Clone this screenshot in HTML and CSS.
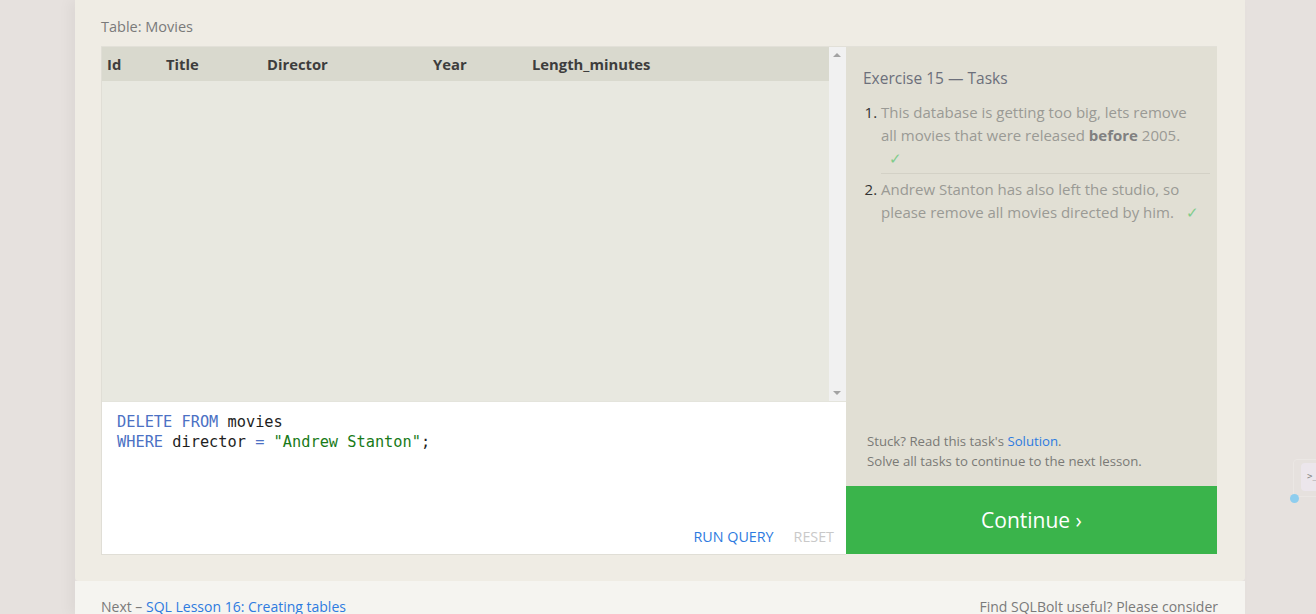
FILE: index.html
```html
<!DOCTYPE html>
<html>
<head>
<meta charset="utf-8">
<link rel="stylesheet" href="styles.css">
</head>
<body>
<div class="page">
  <section class="lesson">
    <div class="table-label">Table: Movies</div>
    <div class="exercise">
      <div class="left">
        <div class="results">
          <div class="results-table">
            <div class="thead">
              <span class="th c-id">Id</span>
              <span class="th c-title">Title</span>
              <span class="th c-director">Director</span>
              <span class="th c-year">Year</span>
              <span class="th c-len">Length_minutes</span>
            </div>
          </div>
          <div class="scrollbar">
            <span class="arrow up"></span>
            <span class="arrow down"></span>
          </div>
        </div>
        <div class="editor">
          <pre class="code"><span class="kw">DELETE FROM</span> movies
<span class="kw">WHERE</span> director <span class="op">=</span> <span class="str">"Andrew Stanton"</span>;</pre>
          <div class="editor-actions">
            <span class="run">RUN QUERY</span>
            <span class="reset">RESET</span>
          </div>
        </div>
      </div>
      <div class="right">
        <div class="tasks">
          <h3 class="tasks-title">Exercise 15 — Tasks</h3>
          <ol class="task-list">
            <li class="task">This database is getting too big, lets remove all movies that were released <b>before</b> 2005. <span class="check">✓</span></li>
            <li class="task">Andrew Stanton has also left the studio, so please remove all movies directed by him. <span class="check">✓</span></li>
          </ol>
          <div class="help">
            <div>Stuck? Read this task's <span class="link">Solution</span>.</div>
            <div>Solve all tasks to continue to the next lesson.</div>
          </div>
        </div>
        <div class="continue">Continue ›</div>
      </div>
    </div>
  </section>
  <footer class="footer">
    <div class="next">Next – <span class="link">SQL Lesson 16: Creating tables</span></div>
    <div class="support">Find SQLBolt useful? Please consider</div>
  </footer>
</div>
<div class="ext">
  <div class="ext-frame"></div>
  <div class="ext-box">&gt;_</div>
  <div class="ext-dot"></div>
</div>
</body>
</html>
```

FILE: styles.css
```css
html, body {
  margin: 0;
  padding: 0;
}
body {
  background: #e6e1de;
  font-family: "Open Sans", "Noto Sans", sans-serif;
  height: 614px;
  overflow: hidden;
}
.page {
  width: 1170px;
  margin-left: 75px;
  box-shadow: -6px 0 12px rgba(0,0,0,0.04);
}
.lesson {
  background: #efece4;
  padding: 16px 26px 26px 26px;
  border-radius: 0 0 4px 4px;
}
.table-label {
  font-size: 14.5px;
  color: #7a7a7a;
  line-height: 22px;
  height: 30px;
}
.exercise {
  display: flex;
  width: 1116px;
  border-top: 1px solid #e2e0d8;
}
.left {
  width: 744px;
  border-left: 1px solid #e0ded6;
  display: flex;
  flex-direction: column;
}
.results {
  height: 354px;
  display: flex;
  background: #e8e8e0;
}
.results-table {
  flex: 1;
}
.thead {
  display: flex;
  height: 34px;
  align-items: center;
  background: #d9d9ce;
}
.th {
  font-weight: 700;
  font-size: 14.8px;
  color: #3d3d3d;
  padding-left: 5px;
  box-sizing: border-box;
}
.c-id { width: 59px; }
.c-title { width: 101px; }
.c-director { width: 166px; }
.c-year { width: 99px; }
.c-len { flex: 1; }
.scrollbar {
  width: 17px;
  background: #f1f1f1;
  position: relative;
}
.arrow {
  position: absolute;
  left: 4px;
  width: 0;
  height: 0;
  border-left: 4px solid transparent;
  border-right: 4px solid transparent;
}
.arrow.up {
  top: 6px;
  border-bottom: 4px solid #a3a3a3;
}
.arrow.down {
  bottom: 6px;
  border-top: 4px solid #a3a3a3;
}
.editor {
  height: 154px;
  background: #fff;
  border-top: 1px solid #e4e4dc;
  border-bottom: 1px solid #e0ded6;
  box-sizing: border-box;
  display: flex;
  flex-direction: column;
  justify-content: space-between;
}
.code {
  margin: 0;
  padding: 10px 0 0 15px;
  font-family: "DejaVu Sans Mono", "Liberation Mono", monospace;
  font-size: 15.3px;
  line-height: 20px;
  color: #1e1e1e;
}
.kw { color: #4c71c4; }
.op { color: #4c71c4; }
.str { color: #187a18; }
.editor-actions {
  display: flex;
  justify-content: flex-end;
  gap: 20px;
  padding: 0 12px 7px 0;
  font-size: 14.3px;
  line-height: 20px;
}
.run { color: #2d7be0; }
.reset { color: #c9c9c9; }
.right {
  width: 371px;
  display: flex;
  flex-direction: column;
}
.tasks {
  height: 439px;
  background: #e1dfd4;
  padding: 20px 7px 0 17px;
  box-sizing: border-box;
  display: flex;
  flex-direction: column;
}
.tasks-title {
  margin: 0;
  font-weight: 400;
  font-size: 15.5px;
  line-height: 22px;
  color: #6c6f7b;
}
.task-list {
  margin: 12px 0 0 0;
  padding: 0 0 0 18px;
}
.task {
  font-size: 15px;
  line-height: 23px;
  color: #9a9a95;
  padding: 0 10px 0 0;
}
.task::marker {
  color: #333;
}
.task b {
  color: #808080;
}
.task + .task {
  border-top: 1px solid #d3d1c6;
  margin-top: 3px;
  padding-top: 4px;
}
.check {
  color: #7fcc8b;
  margin-left: 8px;
}
.help {
  margin-top: auto;
  padding: 0 0 15px 4px;
  font-size: 13.2px;
  line-height: 20px;
  color: #7a7a76;
}
.link {
  color: #2d7be0;
}
.continue {
  height: 68px;
  background: #3ab44b;
  color: #fff;
  font-size: 21px;
  display: flex;
  align-items: center;
  justify-content: center;
}
.footer {
  background: #f5f4f0;
  height: 34px;
  display: flex;
  justify-content: space-between;
  align-items: flex-end;
  padding: 0 27px 0 26px;
  font-size: 14px;
  line-height: 20px;
  color: #7a7a7a;
}
.next, .support {
  margin-bottom: -2px;
}
.ext {
  position: absolute;
  left: 1289px;
  top: 459px;
  width: 27px;
  height: 45px;
}
.ext-frame {
  position: absolute;
  left: 4px;
  top: 0;
  width: 30px;
  height: 36px;
  border: 1px solid #ebe7e4;
  border-radius: 4px;
}
.ext-box {
  position: absolute;
  left: 12px;
  top: 4px;
  width: 30px;
  height: 28px;
  background: #ece6ec;
  border-radius: 4px;
  font-family: "DejaVu Sans Mono", monospace;
  font-size: 9px;
  color: #888;
  padding: 8px 0 0 6px;
  box-sizing: border-box;
}
.ext-dot {
  position: absolute;
  left: 1px;
  top: 35px;
  width: 9px;
  height: 9px;
  border-radius: 50%;
  background: #8ecdee;
}
```
